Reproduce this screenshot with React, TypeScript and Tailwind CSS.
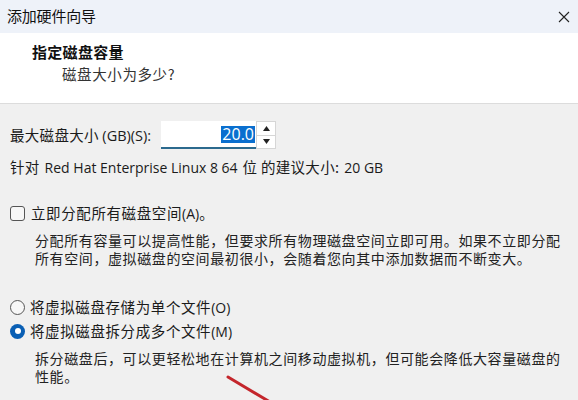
const cjk = "font-['Noto_Sans_CJK_SC','Noto_Sans',sans-serif]";

function Para({ children }: { children: React.ReactNode }) {
  return (
    <p className="pl-[35px] pr-[10px] text-[14px] leading-[18px] tracking-[0.6px] text-[#222]">
      {children}
    </p>
  );
}

export default function App() {
  return (
    <div className={`relative w-[578px] h-[400px] overflow-hidden bg-[#f0f0f0] text-[#1b1b1b] ${cjk}`}>
      {/* title bar */}
      <div className="h-[33px] bg-[#eef2f9] flex items-center justify-between pl-[7px] pr-[8px]">
        <span className="text-[15px] tracking-[-0.2px] text-[#111]">添加硬件向导</span>
        <svg width="12" height="12" viewBox="0 0 12 12" className="text-[#222]">
          <path d="M1 1L11 11M11 1L1 11" stroke="currentColor" strokeWidth="1.1" />
        </svg>
      </div>

      {/* header */}
      <div className="h-[71px] bg-white border-b border-[#dcdcdc] pt-[8px]">
        <div className="pl-[32px] text-[15px] font-bold leading-[22px] tracking-[0.3px] text-[#111]">指定磁盘容量</div>
        <div className="pl-[62px] text-[14.5px] leading-[22px] tracking-[0.6px] text-[#333]">磁盘大小为多少?</div>
      </div>

      {/* body */}
      <div className="pt-[17px]">
        <div className="flex items-center pl-[10px] h-[28px]">
          <span className="text-[14.5px] tracking-[0.3px] w-[151px]">
            最大磁盘大小 <span className="font-['Open_Sans',sans-serif] text-[14.5px] tracking-normal">(GB)(S):</span>
          </span>
          <div className="w-[95px] h-[28px] bg-white border-b-2 border-[#2c6a8e] flex items-center justify-end pr-[1px]">
            <span className="bg-[#0a6fcf] text-white font-['Open_Sans',sans-serif] text-[16px] leading-[17px] px-[1px]">20.0</span>
          </div>
          <div className="w-[20px] h-[28px] flex flex-col bg-white border border-[#d6d6d6]">
            <div className="flex-1 flex items-center justify-center border-b border-[#d6d6d6]">
              <svg width="7" height="5" viewBox="0 0 7 5"><path d="M0 5L3.5 0L7 5Z" fill="#222" /></svg>
            </div>
            <div className="flex-1 flex items-center justify-center">
              <svg width="7" height="5" viewBox="0 0 7 5"><path d="M0 0L3.5 5L7 0Z" fill="#222" /></svg>
            </div>
          </div>
        </div>

        <div className="pl-[10px] mt-[8px] h-[20px] flex items-center text-[14.5px]">
          <span className="tracking-[0.3px]">针对</span>
          <span className="font-['Open_Sans',sans-serif] text-[14px] ml-[5px]">Red Hat Enterprise Linux 8 64</span>
          <span className="ml-[5px] tracking-[0.3px]">位 的建议大小:</span>
          <span className="font-['Open_Sans',sans-serif] text-[14px] ml-[5px]">20 GB</span>
        </div>

        {/* allocate checkbox */}
        <div className="mt-[27px] pl-[10px] flex items-center h-[18px]">
          <div className="w-[15px] h-[15px] rounded-[3px] border border-[#555] bg-[#f7f7f7]" />
          <span className="ml-[6px] text-[14.5px] tracking-[0.6px]">
            立即分配所有磁盘空间<span className="font-['Open_Sans',sans-serif] text-[14px] tracking-normal">(A)</span>。
          </span>
        </div>
        <div className="mt-[9px]">
          <Para>
            分配所有容量可以提高性能，但要求所有物理磁盘空间立即可用。如果不立即分配所有空间，虚拟磁盘的空间最初很小，会随着您向其中添加数据而不断变大。
          </Para>
        </div>

        {/* radios */}
        <div className="mt-[31px] pl-[10px] flex items-center h-[18px]">
          <div className="w-[15px] h-[15px] rounded-full border border-[#555] bg-[#f7f7f7]" />
          <span className="ml-[5px] text-[14.5px] tracking-[0.6px]">
            将虚拟磁盘存储为单个文件<span className="font-['Open_Sans',sans-serif] text-[14px] tracking-normal">(O)</span>
          </span>
        </div>
        <div className="mt-[6px] pl-[10px] flex items-center h-[18px]">
          <div className="w-[15px] h-[15px] rounded-full bg-[#0a5fb4] flex items-center justify-center">
            <div className="w-[6px] h-[6px] rounded-full bg-white" />
          </div>
          <span className="ml-[5px] text-[14.5px] tracking-[0.6px]">
            将虚拟磁盘拆分成多个文件<span className="font-['Open_Sans',sans-serif] text-[14px] tracking-normal">(M)</span>
          </span>
        </div>
        <div className="mt-[9px]">
          <Para>
            拆分磁盘后，可以更轻松地在计算机之间移动虚拟机，但可能会降低大容量磁盘的性能。
          </Para>
        </div>
      </div>

      {/* red annotation arrow */}
      <svg className="absolute left-[220px] top-[370px]" width="60" height="30" viewBox="0 0 60 30">
        <path d="M8 7L50 32" stroke="#c4262c" strokeWidth="3" strokeLinecap="round" />
      </svg>
    </div>
  );
}
